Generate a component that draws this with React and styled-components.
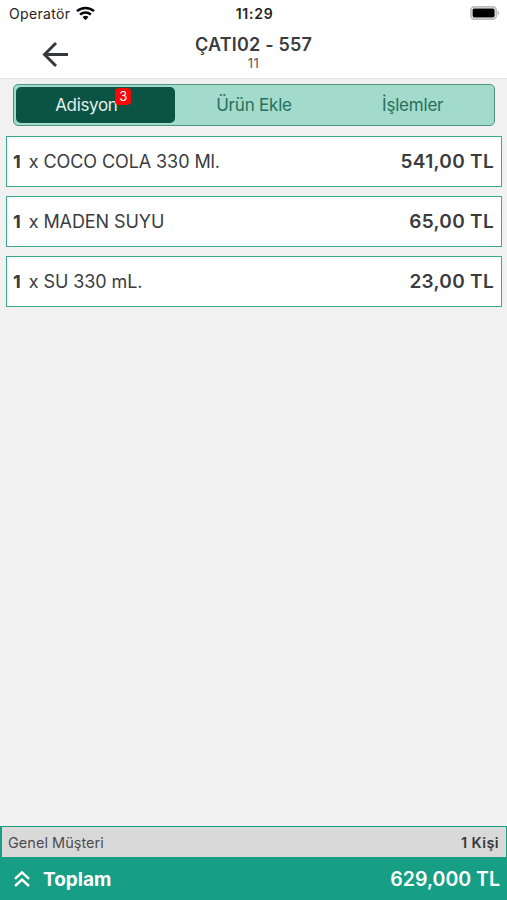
import React from 'react';
import styled, { createGlobalStyle } from 'styled-components';

const GlobalStyle = createGlobalStyle`
  * { box-sizing: border-box; }
  body { margin: 0; background: #f1f1f1; font-family: Inter, "Noto Sans", sans-serif; color: #3a3c3f; }
`;

const Screen = styled.div`
  height: 900px;
  display: flex;
  flex-direction: column;
  background: #f1f1f1;
  overflow: hidden;
  white-space: nowrap;
`;

const StatusBar = styled.div`
  height: 28px;
  flex: none;
  display: grid;
  grid-template-columns: 1fr auto 1fr;
  align-items: center;
  padding: 0 7px 2px 9px;
  background: #fff;
  color: #242424;
`;

const Carrier = styled.div`
  display: flex;
  align-items: center;
  gap: 6px;
  font-size: 14px;
  letter-spacing: 0.35px;
`;

const Clock = styled.div`
  font-size: 14px;
  font-weight: 600;
  letter-spacing: 0.75px;
`;

const BatteryIcon = styled.svg`
  justify-self: end;
`;

const Header = styled.header`
  height: 51px;
  flex: none;
  display: grid;
  grid-template-columns: 100px 1fr 100px;
  background: #fff;
  border-bottom: 1px solid #e2e2e2;
`;

const BackButton = styled.button`
  border: 0;
  background: none;
  padding: 13px 0 0 41px;
  display: flex;
  align-items: flex-start;
`;

const Heading = styled.div`
  text-align: center;
  padding-top: 5px;
`;

const Title = styled.div`
  font-size: 18px;
  line-height: 23px;
  font-weight: 600;
  letter-spacing: 0.2px;
`;

const Subtitle = styled.div`
  font-size: 13px;
  line-height: 15px;
  letter-spacing: 0.4px;
  color: #55575a;
`;

const Tabs = styled.nav`
  height: 42px;
  flex: none;
  margin: 5px 12px 0 13px;
  display: grid;
  grid-template-columns: repeat(3, 1fr);
  padding: 2px;
  background: #a2dacc;
  border: 1px solid #4f947f;
  border-radius: 5px;
`;

const Tab = styled.div`
  display: flex;
  align-items: center;
  justify-content: center;
  padding-right: ${(p) => (p.$active ? 18 : 0)}px;
  border-radius: 5px;
  font-size: 17px;
  letter-spacing: ${(p) => p.$spacing}px;
  background: ${(p) => (p.$active ? '#0b5342' : 'transparent')};
  color: ${(p) => (p.$active ? '#e3f0ec' : '#27705d')};
`;

const TabLabel = styled.span`
  position: relative;
`;

const Badge = styled.span`
  position: absolute;
  left: 60px;
  top: -7px;
  width: 16px;
  height: 17px;
  border-radius: 4px;
  background: #f90808;
  color: #fff;
  font-size: 13px;
  line-height: 17px;
  letter-spacing: 0;
  text-align: center;
`;

const Orders = styled.main`
  flex: 1;
  display: flex;
  flex-direction: column;
  gap: 9px;
  padding: 10px 5px 0 6px;
`;

const OrderRow = styled.div`
  height: 51px;
  display: flex;
  align-items: center;
  justify-content: space-between;
  padding: 0 7px 0 6px;
  background: #fff;
  border: 1px solid #39aa8b;
  font-size: 18px;
`;

const Product = styled.span`
  letter-spacing: -0.08px;
`;

const Quantity = styled.b`
  font-weight: 700;
  margin-right: 3px;
`;

const Price = styled.span`
  font-size: 19px;
  font-weight: 600;
  letter-spacing: 0.3px;
`;

const Footer = styled.footer`
  height: 74px;
  flex: none;
  padding: 1px 1px 0 2px;
  background: #169f84;
`;

const CustomerRow = styled.div`
  height: 30px;
  display: flex;
  align-items: center;
  justify-content: space-between;
  padding: 1px 7px 0 6px;
  background: #dad9da;
  font-size: 14.5px;
  color: #4b4c4e;
`;

const Customer = styled.span`
  letter-spacing: 0.03px;
`;

const Guests = styled.span`
  font-size: 14.5px;
  font-weight: 600;
  letter-spacing: 0.4px;
  color: #36383b;
`;

const TotalRow = styled.div`
  height: 43px;
  display: flex;
  align-items: center;
  padding: 1px 6px 0 11px;
  color: #fff;
`;

const TotalLabel = styled.span`
  margin-left: 12px;
  font-size: 19px;
  font-weight: 700;
`;

const TotalValue = styled.span`
  margin-left: auto;
  font-size: 19.5px;
  font-weight: 600;
`;

const orders = [
  { quantity: 1, name: 'COCO COLA 330 Ml.', price: '541,00 TL' },
  { quantity: 1, name: 'MADEN SUYU', price: '65,00 TL' },
  { quantity: 1, name: 'SU 330 mL.', price: '23,00 TL' },
];

export default function App() {
  return (
    <Screen>
      <GlobalStyle />
      <StatusBar>
        <Carrier>
          Operatör
          <svg width="19" height="15" viewBox="0 0 19 15" fill="none" stroke="#050505" strokeWidth="2.5">
            <path d="M1 5.2C5.8.8 13.2.8 18 5.2" />
            <path d="M4.1 8.6C7.2 5.8 11.8 5.8 14.9 8.6" />
            <path d="M6.5 11.1Q9.5 8.4 12.5 11.1L9.5 14.2Z" fill="#050505" stroke="none" />
          </svg>
        </Carrier>
        <Clock>11:29</Clock>
        <BatteryIcon width="30" height="14" viewBox="0 0 30 14">
          <rect x="0.9" y="0.9" width="25.4" height="12.2" rx="3.6" fill="#fff" stroke="#bcbcbc" strokeWidth="1.8" />
          <rect x="2.6" y="2.6" width="22" height="8.8" rx="1.6" fill="#000" />
          <path d="M27.9 4.6Q30.3 7 27.9 9.4Z" fill="#aaa" />
        </BatteryIcon>
      </StatusBar>
      <Header>
        <BackButton aria-label="Geri">
          <svg width="28" height="27" viewBox="0 0 28 27" fill="none" stroke="#36383b" strokeWidth="2.9">
            <path d="M15 2L3.5 13.5L15 25M3.7 13.5H27" />
          </svg>
        </BackButton>
        <Heading>
          <Title>ÇATI02 - 557</Title>
          <Subtitle>11</Subtitle>
        </Heading>
      </Header>
      <Tabs>
        <Tab $active $spacing={-0.35}>
          <TabLabel>Adisyon<Badge>3</Badge></TabLabel>
        </Tab>
        <Tab $spacing={-0.2}>Ürün Ekle</Tab>
        <Tab $spacing={-0.2}>İşlemler</Tab>
      </Tabs>
      <Orders>
        {orders.map((o) => (
          <OrderRow key={o.name}>
            <Product><Quantity>{o.quantity}</Quantity> x {o.name}</Product>
            <Price>{o.price}</Price>
          </OrderRow>
        ))}
      </Orders>
      <Footer>
        <CustomerRow>
          <Customer>Genel Müşteri</Customer>
          <Guests>1 Kişi</Guests>
        </CustomerRow>
        <TotalRow>
          <svg width="18" height="18" viewBox="0 0 18 18" fill="none" stroke="#fff" strokeWidth="2.5">
            <path d="M2 8.8L9 2.4L16 8.8M2 16L9 9.6L16 16" />
          </svg>
          <TotalLabel>Toplam</TotalLabel>
          <TotalValue>629,000 TL</TotalValue>
        </TotalRow>
      </Footer>
    </Screen>
  );
}
